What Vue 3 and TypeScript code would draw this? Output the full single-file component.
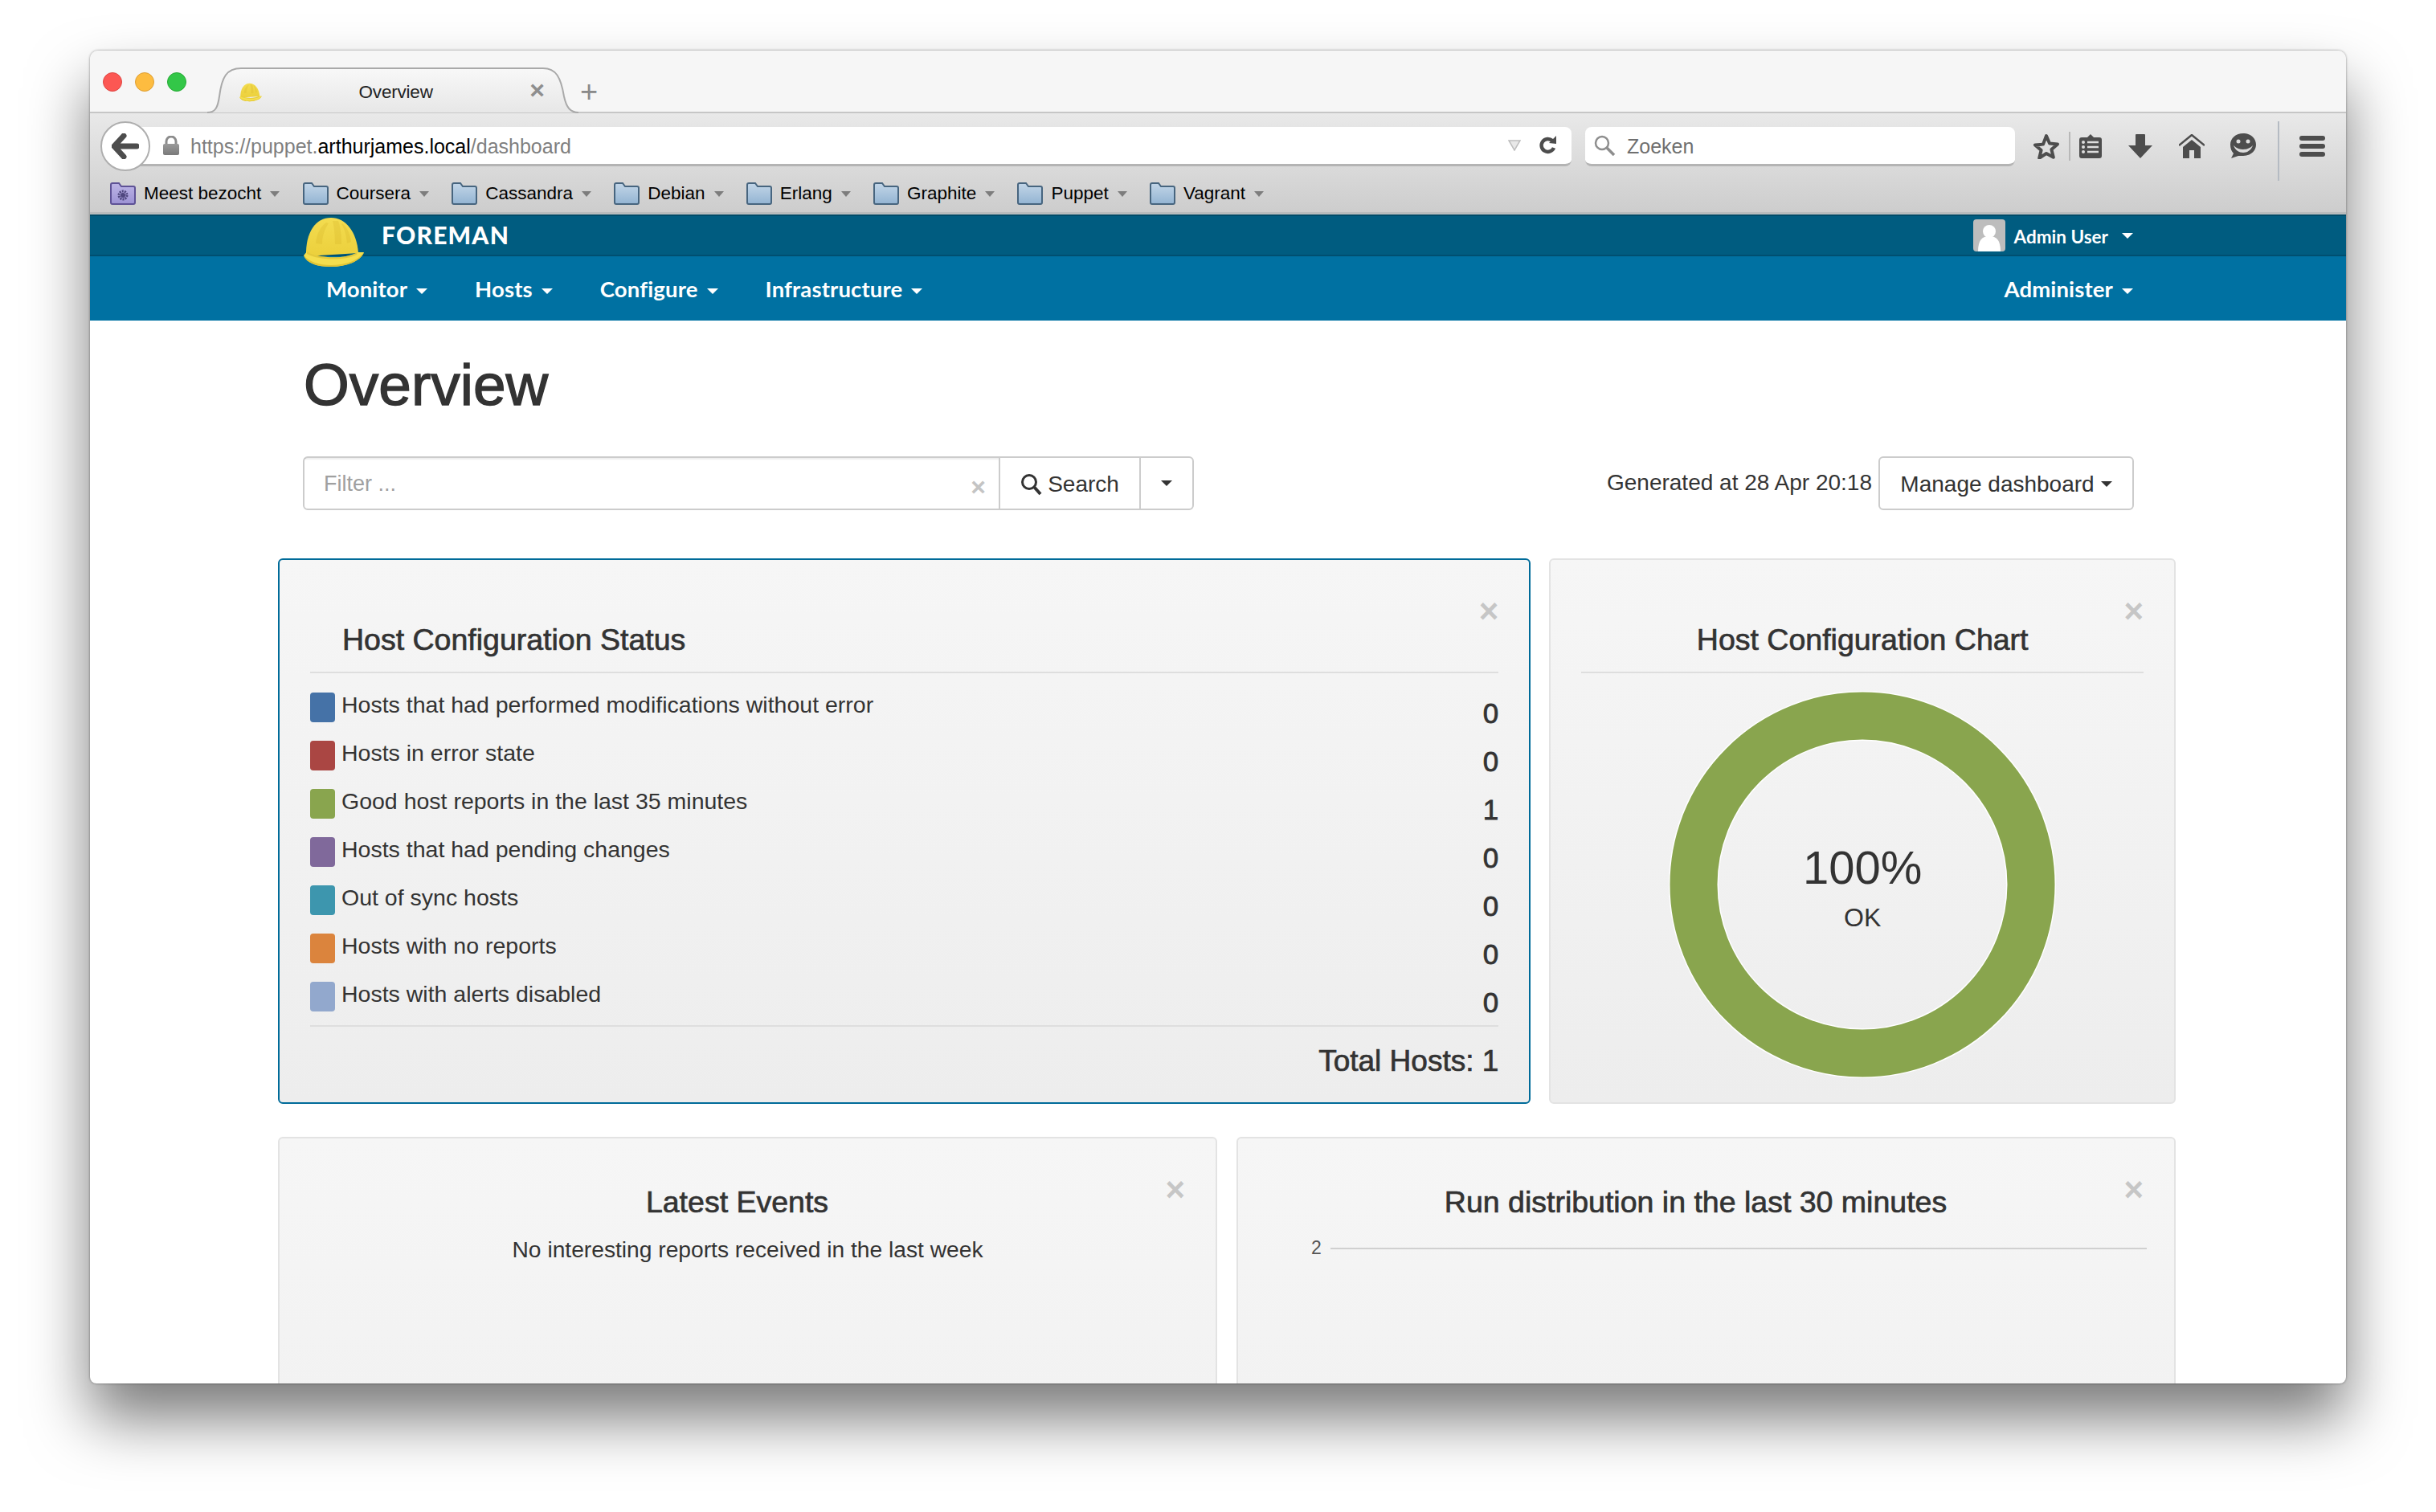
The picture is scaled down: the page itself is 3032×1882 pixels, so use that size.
<script setup lang="ts">
const bookmarks = ['Coursera', 'Cassandra', 'Debian', 'Erlang', 'Graphite', 'Puppet', 'Vagrant']
const navItems = ['Monitor', 'Hosts', 'Configure', 'Infrastructure']
const statusRows = [
  { label: 'Hosts that had performed modifications without error', color: '#4572a7', count: 0 },
  { label: 'Hosts in error state', color: '#aa4643', count: 0 },
  { label: 'Good host reports in the last 35 minutes', color: '#89a54e', count: 1 },
  { label: 'Hosts that had pending changes', color: '#80699b', count: 0 },
  { label: 'Out of sync hosts', color: '#3d96ae', count: 0 },
  { label: 'Hosts with no reports', color: '#db843d', count: 0 },
  { label: 'Hosts with alerts disabled', color: '#92a8cd', count: 0 },
]
</script>

<template>
  <div class="page">
    <svg class="defs" width="0" height="0" aria-hidden="true">
      <defs>
        <linearGradient id="dome" x1="0" y1="0" x2="0" y2="1">
          <stop offset="0" stop-color="#f3dc50" />
          <stop offset="1" stop-color="#ecd03c" />
        </linearGradient>
        <linearGradient id="folder-blue" x1="0" y1="0" x2="0" y2="1">
          <stop offset="0" stop-color="#c3d6e8" />
          <stop offset="1" stop-color="#93b4d2" />
        </linearGradient>
        <linearGradient id="folder-purple" x1="0" y1="0" x2="0" y2="1">
          <stop offset="0" stop-color="#bdb5e6" />
          <stop offset="1" stop-color="#9c92d4" />
        </linearGradient>
        <linearGradient id="tab-fill" x1="0" y1="0" x2="0" y2="1">
          <stop offset="0" stop-color="#f8f8f8" />
          <stop offset="1" stop-color="#e7e7e7" />
        </linearGradient>
        <linearGradient id="lock-fill" x1="0" y1="0" x2="0" y2="1">
          <stop offset="0" stop-color="#9a9a9a" />
          <stop offset="1" stop-color="#7a7a7a" />
        </linearGradient>
        <symbol id="helmet" viewBox="0 0 75 65">
          <path d="M3 50C2 20 15 2 34 2c18 0 32 17 34 44z" fill="url(#dome)" />
          <path d="M15 34C16 22 21 13 28 8l3 1C26 16 23 25 23 35zM36 6l7 0c3 8 4 18 4 29l-8 0C39 24 38 14 36 6zM48 9c6 5 10 13 11 23l-5 2C53 24 51 16 47 10z" fill="#d8b62a" opacity=".3" />
          <path d="M0 49l4-5c14 9 48 10 63 1l8 0c-4 11-22 18-41 18C17 63 4 59 0 49z" fill="#f4de4e" />
          <path d="M4 44c14 9 48 10 63 1l-1 3C50 56 18 55 4 47z" fill="#d9bb2e" opacity=".6" />
          <path d="M0 49C4 59 17 63 34 63c19 0 37-7 41-18-8 11-24 16-41 16C19 61 7 57 0 49z" fill="#e0c434" />
        </symbol>
      </defs>
    </svg>

    <div class="window">
      <div class="titlebar">
        <div class="lights">
          <span class="light red"></span>
          <span class="light amber"></span>
          <span class="light green"></span>
        </div>
        <div class="tab">
          <svg class="tab-shape" viewBox="0 0 462 57" width="462" height="57">
            <path d="M0 56C10 56 13 50 15 36 18 12 24 1 42 1H418C434 1 440 12 444 36 447 50 452 56 462 56" fill="url(#tab-fill)" stroke="#a9a9a9" stroke-width="2" />
          </svg>
          <svg class="favicon" width="28" height="24"><use href="#helmet" /></svg>
          <span class="tab-title">Overview</span>
          <span class="tab-close">×</span>
        </div>
        <span class="tab-new">+</span>
      </div>

      <div class="toolbar">
        <div class="address-row">
          <div class="back">
            <svg width="34" height="32" viewBox="0 0 34 32"><path d="M15 3L3 16l12 13M4 16h27" fill="none" stroke="#4d4d4d" stroke-width="7" stroke-linecap="round" stroke-linejoin="round" /></svg>
          </div>
          <div class="urlbar">
            <svg class="lock" width="20" height="24" viewBox="0 0 20 24">
              <path d="M4 11V7a6 6 0 0 1 12 0v4" fill="none" stroke="#8c8c8c" stroke-width="3" />
              <rect y="10" width="20" height="14" rx="2" fill="url(#lock-fill)" />
            </svg>
            <span class="url"><span class="url-dim">https://puppet.</span>arthurjames.local<span class="url-dim">/dashboard</span></span>
            <svg class="url-drop" width="16" height="14" viewBox="0 0 16 14"><path d="M1 1h14L8 13z" fill="#e8e8e8" stroke="#bdbdbd" stroke-width="1.5" /></svg>
            <svg class="reload" width="24" height="26" viewBox="0 0 24 26">
              <path d="M19 16a8 8 0 1 1-2-9" fill="none" stroke="#4d4d4d" stroke-width="4.5" />
              <path d="M13 10l9 1V1z" fill="#4d4d4d" />
            </svg>
          </div>
          <div class="searchbar">
            <svg width="28" height="26" viewBox="0 0 28 26"><circle cx="10" cy="10" r="8" fill="none" stroke="#8e8e8e" stroke-width="2.5" /><path d="M16 16l9 9" stroke="#8e8e8e" stroke-width="3.5" /></svg>
            <span class="search-text">Zoeken</span>
          </div>
          <svg class="tool star" width="34" height="32" viewBox="0 0 34 32"><path d="M17 3l4 9.600 10 .8-7.600 6.600 2.400 9.800L17 25l-8.800 5.800 2.400-9.800L3 14.400l10-.8z" fill="none" stroke="#4d4d4d" stroke-width="4" stroke-linejoin="round" /></svg>
          <span class="tool-sep short"></span>
          <svg class="tool clip" width="28" height="30" viewBox="0 0 28 30">
            <path d="M3 4h7l4-4 4 4h7a3 3 0 0 1 3 3v20a3 3 0 0 1-3 3H3a3 3 0 0 1-3-3V7a3 3 0 0 1 3-3z" fill="#4d4d4d" />
            <path d="M10 10h14M10 16h14M10 22h14" stroke="#ddd" stroke-width="2.5" />
            <circle cx="5" cy="10" r="2" fill="#ddd" /><circle cx="5" cy="16" r="2" fill="#ddd" /><circle cx="5" cy="22" r="2" fill="#ddd" />
          </svg>
          <svg class="tool down" width="30" height="30" viewBox="0 0 30 30"><path d="M9 1a1 1 0 0 1 1-1h10a1 1 0 0 1 1 1v13h9L15 30 0 14h9z" fill="#4d4d4d" /></svg>
          <svg class="tool home" width="32" height="30" viewBox="0 0 32 30">
            <path d="M0 14L16 1l16 13" fill="none" stroke="#4d4d4d" stroke-width="2.5" />
            <path d="M16 7l11 9v14h-8V20h-6v10H5V16z" fill="#4d4d4d" />
          </svg>
          <svg class="tool smile" width="34" height="32" viewBox="0 0 34 32">
            <path d="M17 0c9 0 16 6 16 14s-7 14-16 14c-3 0-4 0-6 0l-9 3 3-6C2 22 1 18 1 14 1 6 8 0 17 0z" fill="#4d4d4d" />
            <circle cx="11" cy="10" r="2.5" fill="#ddd" /><circle cx="23" cy="10" r="2.5" fill="#ddd" />
            <path d="M5 15c4 4 8 5 12 5s8-1 12-5c-2 6-7 9-12 9S7 21 5 15z" fill="#ddd" />
          </svg>
          <span class="tool-sep tall"></span>
          <svg class="tool burger" width="32" height="26" viewBox="0 0 32 26">
            <rect width="32" height="6" rx="3" fill="#4d4d4d" /><rect y="10" width="32" height="6" rx="3" fill="#4d4d4d" /><rect y="20" width="32" height="6" rx="3" fill="#4d4d4d" />
          </svg>
        </div>

        <div class="bookmarks">
          <div class="bookmark">
            <svg class="folder" width="32" height="28" viewBox="0 0 32 28">
              <path d="M1 25V3a2 2 0 0 1 2-2h8l3 4h15a2 2 0 0 1 2 2v18a2 2 0 0 1-2 2H3a2 2 0 0 1-2-2z" fill="url(#folder-purple)" stroke="#5e5296" stroke-width="2" />
              <circle cx="16" cy="16" r="5" fill="none" stroke="#4f477f" stroke-width="3" stroke-dasharray="2 1.1" />
              <circle cx="16" cy="16" r="3" fill="#4f477f" />
            </svg>
            <span>Meest bezocht</span>
            <i class="book-caret"></i>
          </div>
          <div v-for="name in bookmarks" :key="name" class="bookmark">
            <svg class="folder" width="32" height="28" viewBox="0 0 32 28">
              <path d="M1 25V3a2 2 0 0 1 2-2h8l3 4h15a2 2 0 0 1 2 2v18a2 2 0 0 1-2 2H3a2 2 0 0 1-2-2z" fill="url(#folder-blue)" stroke="#47657f" stroke-width="2" />
            </svg>
            <span>{{ name }}</span>
            <i class="book-caret"></i>
          </div>
        </div>
      </div>

      <header class="topbar">
        <svg class="logo" width="75" height="65"><use href="#helmet" /></svg>
        <span class="brand">FOREMAN</span>
        <div class="user">
          <span class="avatar">
            <svg width="40" height="40" viewBox="0 0 40 40"><circle cx="20" cy="15" r="8" fill="#fff" /><path d="M6 40c0-14 5-19 14-19s14 5 14 19z" fill="#fff" /></svg>
          </span>
          <span class="user-name">Admin User</span>
          <i class="caret"></i>
        </div>
      </header>

      <nav class="mainnav">
        <div v-for="item in navItems" :key="item" class="nav-item">{{ item }}<i class="caret"></i></div>
        <div class="nav-item nav-right">Administer<i class="caret"></i></div>
      </nav>

      <main class="content">
        <h1>Overview</h1>

        <div class="controls">
          <div class="filter">
            <div class="filter-input">
              <span>Filter ...</span>
              <b>×</b>
            </div>
            <div class="filter-search">
              <svg width="28" height="28" viewBox="0 0 28 28"><circle cx="11" cy="11" r="8.5" fill="none" stroke="#333" stroke-width="3" /><path d="M17 17l8 9" stroke="#333" stroke-width="4" /></svg>
              Search
            </div>
            <div class="filter-more"><i class="caret dark"></i></div>
          </div>
          <div class="generated">Generated at 28 Apr 20:18</div>
          <div class="manage">Manage dashboard<i class="caret dark"></i></div>
        </div>

        <div class="row row-top">
          <section class="panel panel-status">
            <span class="close">×</span>
            <h4 class="title-left">Host Configuration Status</h4>
            <ul class="status">
              <li v-for="row in statusRows" :key="row.label">
                <span class="swatch" :style="{ background: row.color }"></span>
                <span class="status-label">{{ row.label }}</span>
                <span class="status-count">{{ row.count }}</span>
              </li>
            </ul>
            <div class="total">Total Hosts: 1</div>
          </section>

          <section class="panel">
            <span class="close">×</span>
            <h4>Host Configuration Chart</h4>
            <div class="donut">
              <svg width="482" height="482" viewBox="0 0 482 482">
                <circle cx="241" cy="241" r="210" fill="none" stroke="#fff" stroke-width="62" />
                <circle cx="241" cy="241" r="210" fill="none" stroke="#89a54e" stroke-width="59" />
              </svg>
              <div class="donut-label">
                <div class="pct">100%</div>
                <div class="ok">OK</div>
              </div>
            </div>
          </section>
        </div>

        <div class="row row-bottom">
          <section class="panel panel-low">
            <span class="close">×</span>
            <h5>Latest Events</h5>
            <p>No interesting reports received in the last week</p>
          </section>
          <section class="panel panel-low">
            <span class="close">×</span>
            <h5>Run distribution in the last 30 minutes</h5>
            <div class="axis"><span>2</span><i></i></div>
          </section>
        </div>
      </main>
    </div>
  </div>
</template>

<style scoped>
.page {
  width: 3032px;
  height: 1882px;
  box-sizing: border-box;
  padding: 63px 112px 0;
  background: #fff;
  overflow: hidden;
  font-family: "Liberation Sans", Arial, sans-serif;
  color: #333;
}
.defs {
  position: absolute;
}
.window {
  height: 1659px;
  display: flex;
  flex-direction: column;
  background: #fff;
  border-radius: 10px 10px 8px 8px;
  box-shadow: 0 44px 76px rgba(0, 0, 0, 0.52), 0 0 3px rgba(0, 0, 0, 0.45);
  overflow: clip;
}

/* browser chrome */
.titlebar {
  height: 78px;
  flex: none;
  box-sizing: border-box;
  display: flex;
  align-items: flex-end;
  background: #f6f6f6;
  border-bottom: 2px solid #c6c6c6;
}
.lights {
  display: flex;
  gap: 16px;
  align-self: flex-start;
  margin: 27px 0 0 16px;
}
.light {
  width: 24px;
  height: 24px;
  border-radius: 50%;
  box-sizing: border-box;
}
.red {
  background: #fc5753;
  border: 1px solid #df4744;
}
.amber {
  background: #fdbc40;
  border: 1px solid #de9f34;
}
.green {
  background: #33c748;
  border: 1px solid #27aa35;
}
.tab {
  position: relative;
  width: 462px;
  height: 57px;
  margin: 0 0 -2px 26px;
  display: flex;
  align-items: center;
  padding: 4px 42px 0 40px;
  box-sizing: border-box;
  font-size: 22.5px;
  color: #222;
}
.tab-shape {
  position: absolute;
  left: 0;
  top: 0;
}
.favicon,
.tab-title,
.tab-close {
  position: relative;
}
.tab-title {
  flex: 1;
  text-align: center;
  letter-spacing: -0.2px;
}
.tab-close {
  color: #8e8e8e;
  font-size: 32px;
  font-weight: 700;
  line-height: 1;
  margin-top: -5px;
}
.tab-new {
  margin: 0 0 6px 2px;
  color: #8a8a8a;
  font-size: 38px;
  line-height: 1;
}
.toolbar {
  height: 126px;
  flex: none;
  box-sizing: border-box;
  background: linear-gradient(#e9e9e9, #cdcdcd);
  border-bottom: 3px solid #b9bcbd;
  padding: 10px 0 0 13px;
}
.address-row {
  display: flex;
  align-items: center;
  height: 62px;
}
.back {
  width: 62px;
  height: 62px;
  flex: none;
  box-sizing: border-box;
  border: 2px solid #aeaeae;
  border-radius: 50%;
  background: #fff;
  display: flex;
  align-items: center;
  justify-content: center;
  position: relative;
  z-index: 1;
  margin-right: -20px;
}
.urlbar {
  width: 1789px;
  height: 49px;
  box-sizing: border-box;
  display: flex;
  align-items: center;
  background: #fff;
  border-bottom: 3px solid #b4b4b4;
  border-radius: 0 8px 8px 0;
  padding-left: 36px;
}
.lock {
  flex: none;
}
.url {
  margin: 4px 0 0 14px;
  font-size: 25px;
  color: #000;
  flex: 1;
}
.url-dim {
  color: #7f7f7f;
}
.url-drop {
  margin-right: 22px;
}
.reload {
  margin-right: 17px;
}
.searchbar {
  width: 535px;
  height: 49px;
  box-sizing: border-box;
  margin-left: 17px;
  display: flex;
  align-items: center;
  gap: 13px;
  background: #fff;
  border-bottom: 3px solid #b4b4b4;
  border-radius: 8px;
  padding-left: 11px;
  font-size: 25px;
  color: #6f6f6f;
}
.search-text {
  margin-top: 4px;
}
.tool {
  flex: none;
}
.star {
  margin-left: 22px;
}
.tool-sep {
  width: 2px;
  flex: none;
  background: #b8b8b8;
}
.tool-sep.short {
  height: 36px;
  margin-left: 11px;
}
.tool-sep.tall {
  height: 74px;
  margin: 12px 0 0 26px;
  background: #b5bbc3;
}
.clip {
  margin-left: 11px;
}
.down {
  margin-left: 33px;
}
.home {
  margin-left: 33px;
}
.smile {
  margin-left: 31px;
}
.burger {
  margin-left: 25px;
}
.bookmarks {
  display: flex;
  align-items: center;
  height: 36px;
  margin-top: 10px;
  padding-left: 12px;
}
.bookmark {
  display: flex;
  align-items: center;
  font-size: 22.5px;
  color: #000;
  margin-right: 28.2px;
}
.folder {
  margin-right: 10px;
  flex: none;
}
.book-caret {
  width: 0;
  height: 0;
  margin-left: 11px;
  border-left: 6px solid transparent;
  border-right: 6px solid transparent;
  border-top: 7px solid #7d7d7d;
}

/* foreman header */
.topbar {
  position: relative;
  height: 52px;
  flex: none;
  box-sizing: border-box;
  display: flex;
  align-items: center;
  padding: 0 265px 0 363px;
  background: #005c80;
  border-top: 2px solid #004b69;
  border-bottom: 2px solid #004f70;
}
.logo {
  position: absolute;
  left: 266px;
  top: 0;
  z-index: 2;
}
.brand {
  color: #fff;
  font-family: Lato, sans-serif;
  font-weight: 900;
  font-size: 30px;
  letter-spacing: 1.2px;
  margin-top: -2px;
}
.user {
  margin-left: auto;
  display: flex;
  align-items: center;
  color: #fff;
  font-family: Lato, sans-serif;
  font-weight: 700;
  font-size: 22.5px;
}
.user-name {
  margin-top: 2px;
}
.avatar {
  width: 40px;
  height: 40px;
  background: #bdbdbd;
  border-radius: 4px;
  overflow: hidden;
  margin-right: 11px;
}
.avatar svg {
  display: block;
}
.caret {
  display: inline-block;
  width: 0;
  height: 0;
  margin-left: 11px;
  border-left: 7px solid transparent;
  border-right: 7px solid transparent;
  border-top: 7px solid #fff;
  vertical-align: middle;
}
.caret.dark {
  border-top-color: #333;
  margin-left: 8px;
}
.user .caret {
  margin-left: 17px;
}
.mainnav {
  height: 80px;
  flex: none;
  display: flex;
  align-items: center;
  gap: 59px;
  box-sizing: border-box;
  padding: 0 265px 0 294px;
  background: #0071a2;
}
.nav-item {
  color: #fff;
  font-family: Lato, sans-serif;
  font-weight: 700;
  font-size: 27.5px;
  letter-spacing: 0.15px;
  white-space: nowrap;
}
.nav-right {
  margin-left: auto;
}

/* page content */
.content {
  flex: 1;
  min-height: 0;
  overflow: hidden;
  padding: 0 212px 0 234px;
}
h1 {
  margin: 38px 0 0 32px;
  font-size: 73px;
  line-height: 84px;
  font-weight: 400;
  -webkit-text-stroke: 1.4px #333;
}
.controls {
  display: flex;
  align-items: center;
  height: 67px;
  margin: 47px 52px 0 31px;
  font-size: 28px;
}
.filter {
  width: 1109px;
  height: 67px;
  box-sizing: border-box;
  display: flex;
  border: 2px solid #ccc;
  border-radius: 6px;
  background: #fff;
}
.filter-input {
  flex: 1;
  display: flex;
  align-items: center;
  justify-content: space-between;
  padding: 2px 16px 0 24px;
  font-size: 27px;
  color: #a0a0a0;
  box-shadow: inset 0 3px 2px -1px rgba(0, 0, 0, 0.07);
}
.filter-input b {
  color: #c4c4c4;
  margin-top: 8px;
  font-size: 32px;
}
.filter-search {
  width: 175px;
  box-sizing: border-box;
  border-left: 2px solid #ccc;
  display: flex;
  align-items: center;
  justify-content: center;
  gap: 6px;
  padding-top: 2px;
  color: #333;
}
.filter-more {
  width: 66px;
  box-sizing: border-box;
  border-left: 2px solid #ccc;
  display: flex;
  align-items: center;
  justify-content: center;
}
.filter-more .caret {
  margin: 0;
}
.generated {
  margin: -2px 8px 0 auto;
  color: #333;
}
.manage {
  width: 318px;
  height: 67px;
  box-sizing: border-box;
  border: 2px solid #ccc;
  border-radius: 6px;
  background: #fff;
  display: flex;
  align-items: center;
  justify-content: center;
  padding-top: 2px;
}
.row {
  display: grid;
}
.row-top {
  grid-template-columns: 2fr 1fr;
  height: 679px;
  gap: 23px;
  margin-top: 60px;
}
.row-bottom {
  grid-template-columns: 1fr 1fr;
  height: 400px;
  gap: 24px;
  margin-top: 41px;
}
.panel {
  position: relative;
  box-sizing: border-box;
  border: 2px solid #e3e3e3;
  border-radius: 6px;
  background: linear-gradient(#f6f6f6, #ededed);
  padding: 0 38px;
  min-width: 0;
}
.row-bottom .panel {
  background: linear-gradient(#f6f6f6, #f1f1f1);
}
.panel-status {
  border-color: #006b99;
}
.close {
  position: absolute;
  top: 43px;
  right: 38px;
  color: #c6c6c6;
  font-size: 42px;
  line-height: 42px;
  font-weight: 700;
}
h4,
h5 {
  margin: 0;
  font-size: 37.5px;
  line-height: 44px;
  font-weight: 400;
  text-align: center;
  -webkit-text-stroke: 0.7px #333;
}
h4 {
  padding: 77px 0 18px;
  border-bottom: 2px solid #dedede;
}
.title-left {
  text-align: left;
  padding-left: 40px;
}
h5 {
  padding: 57px 26px 0 0;
}
.panel-low p {
  margin: 21px 0 0;
  text-align: center;
  font-size: 28.2px;
  line-height: 32px;
}
.status {
  list-style: none;
  margin: 0;
  padding: 24px 0 0;
  border-bottom: 2px solid #dedede;
}
.status li {
  display: flex;
  height: 60px;
  font-size: 28.5px;
  line-height: 30px;
}
.status li:last-child {
  height: 54px;
}
.swatch {
  width: 31px;
  height: 37px;
  border-radius: 4px;
  flex: none;
  margin-right: 8px;
}
.status-label {
  flex: 1;
}
.status-count {
  margin-top: 11px;
  font-size: 35px;
  -webkit-text-stroke: 0.8px #333;
}
.total {
  text-align: right;
  font-size: 37px;
  line-height: 44px;
  margin-top: 21px;
  -webkit-text-stroke: 0.7px #333;
}
.donut {
  position: relative;
  width: 482px;
  height: 482px;
  margin: 22px auto 0;
}
.donut svg {
  display: block;
}
.donut-label {
  position: absolute;
  inset: 0;
  display: flex;
  flex-direction: column;
  align-items: center;
  padding-top: 188px;
  box-sizing: border-box;
}
.pct {
  font-size: 58px;
  line-height: 64px;
}
.ok {
  font-size: 32px;
  line-height: 38px;
  margin-top: 11px;
}
.axis {
  display: flex;
  align-items: center;
  gap: 11px;
  margin: 22px -4px 0 53px;
  font-size: 23px;
  color: #555;
}
.axis i {
  flex: 1;
  height: 2px;
  background: #d0d0d0;
}
</style>

<style>
html,
body {
  margin: 0;
  background: #fff;
}
</style>
